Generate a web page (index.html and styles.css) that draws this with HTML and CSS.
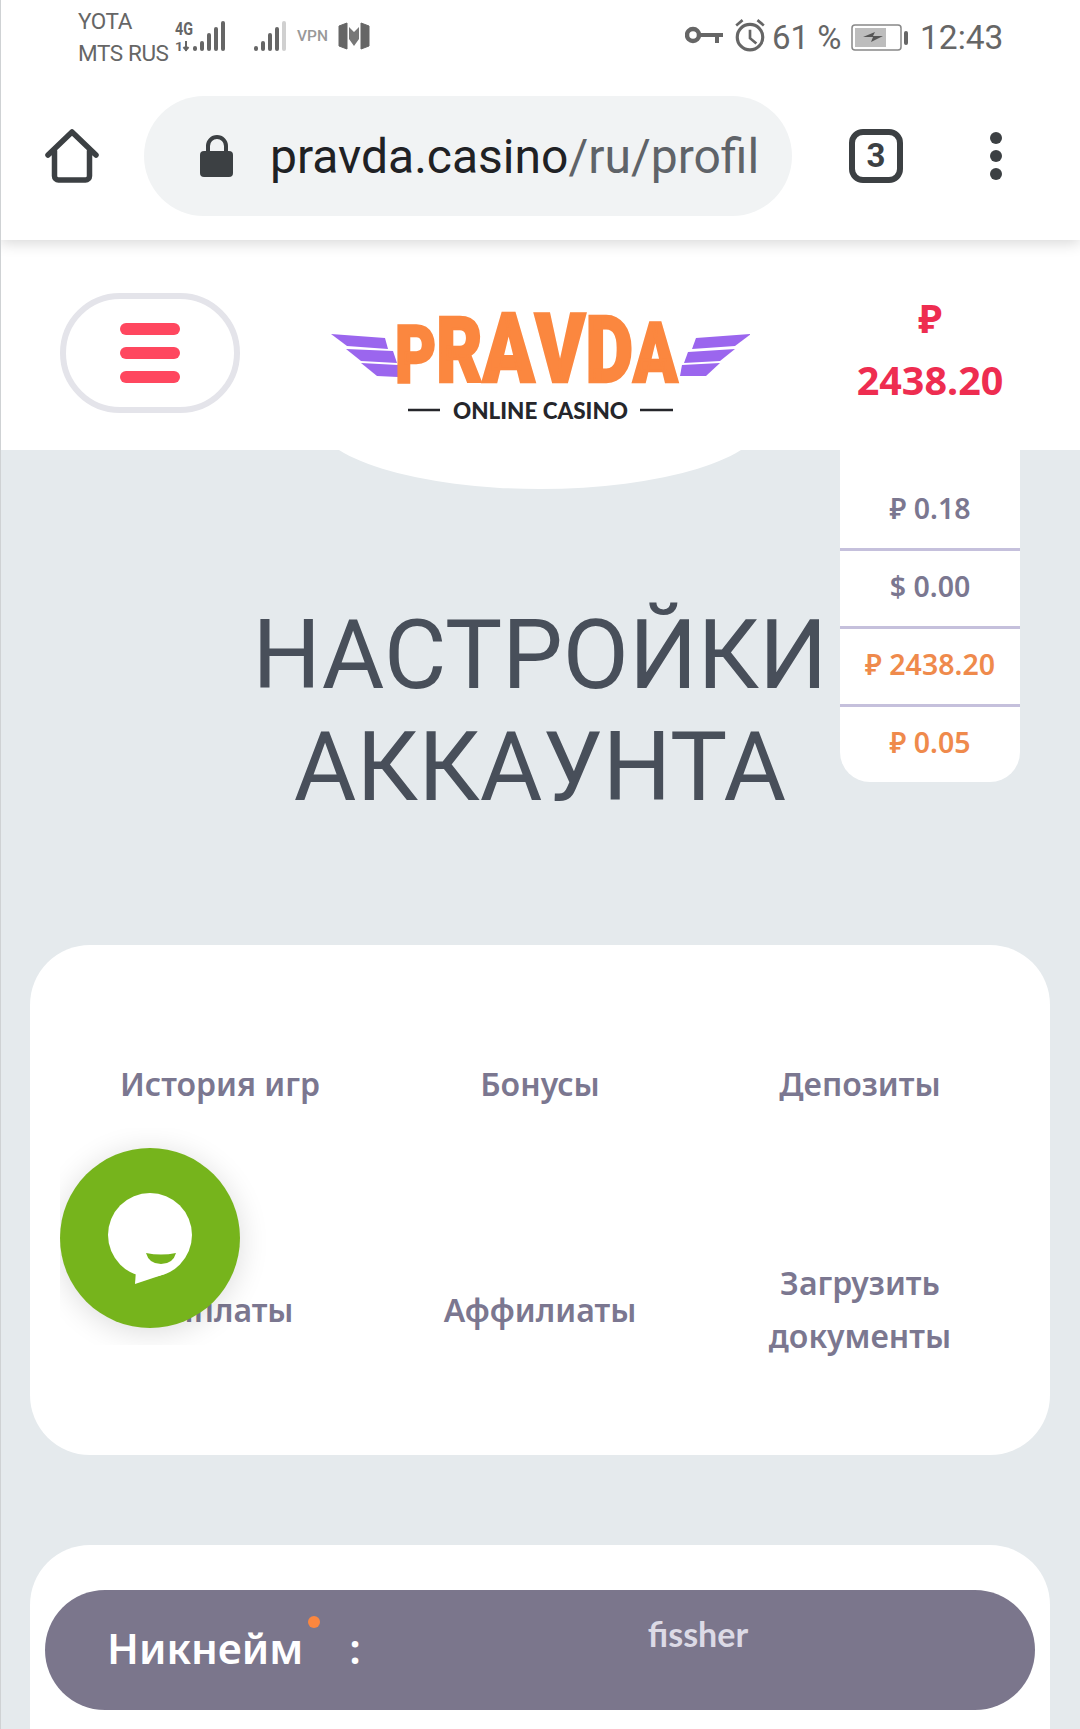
FILE: index.html
```html
<!DOCTYPE html>
<html lang="ru">
<head>
    <meta charset="UTF-8">
    <meta name="viewport" content="width=device-width, initial-scale=1.0">
    <title>Настройки аккаунта</title>
    <link rel="stylesheet" href="styles.css">
</head>
<body>
    <!-- status bar -->
    <div class="status">
        <div class="carriers">
            <div>YOTA</div>
            <div>MTS RUS</div>
        </div>
        <svg class="status-left" width="200" height="40" viewBox="170 15 200 40">
            <text x="175" y="35" class="net-label" textLength="18" lengthAdjust="spacingAndGlyphs">4G</text>
            <text x="175" y="51" class="net-label small" textLength="8" lengthAdjust="spacingAndGlyphs">1</text>
            <path d="M186 41v10M183.500 47l2.500 3 2.500-3" class="net-arrow"/>
            <g fill="#666">
                <rect x="193" y="46" width="4" height="5" rx="2"/>
                <rect x="200" y="41" width="4" height="10" rx="2"/>
                <rect x="207" y="33" width="4" height="18" rx="2"/>
                <rect x="214" y="27" width="4" height="24" rx="2"/>
                <rect x="221" y="21" width="4" height="30" rx="2"/>
                <rect x="254" y="46" width="4" height="5" rx="2"/>
                <rect x="261" y="41" width="4" height="10" rx="2"/>
                <rect x="268" y="33" width="4" height="18" rx="2"/>
                <rect x="275" y="27" width="4" height="24" rx="2"/>
            </g>
            <rect x="282" y="21" width="4" height="30" rx="2" fill="#d0d0d0"/>
            <text x="297" y="41" class="vpn">VPN</text>
            <path d="M339 26l8-3v26l-8-3zM369 26l-8-3v26l8-3z" fill="#666" stroke="#666" stroke-width="1" stroke-linejoin="round"/>
            <path d="M349 27l5 5 5-5v12l-5 7-5-7z" fill="#777"/>
        </svg>
        <div class="status-right">
            <svg width="40" height="22" viewBox="0 0 40 22">
                <circle cx="8" cy="9" r="6" fill="none" stroke="#666" stroke-width="4.500"/>
                <path d="M15 9h23M32 9v8" fill="none" stroke="#666" stroke-width="4"/>
            </svg>
            <svg class="alarm" width="34" height="34" viewBox="0 0 32 32">
                <circle cx="16" cy="18" r="12" fill="none" stroke="#666" stroke-width="3"/>
                <path d="M16 11v8l6 5M3 7l6-5M29 7l-6-5" fill="none" stroke="#666" stroke-width="2.500"/>
            </svg>
            <span class="pct">61 %</span>
            <svg class="battery" width="58" height="28" viewBox="0 0 58 28">
                <rect x="1" y="2" width="49" height="25" rx="3" fill="none" stroke="#888" stroke-width="1.500"/>
                <rect x="4" y="5" width="31" height="19" fill="#bdbdbd"/>
                <path d="M12 14l12-5-2 4h10l-12 6 2-5z" fill="#555"/>
                <rect x="53" y="8" width="4" height="14" rx="2" fill="#666"/>
            </svg>
            <span class="clock">12:43</span>
        </div>
    </div>

    <!-- browser toolbar -->
    <div class="toolbar">
        <svg class="home-icon" width="54" height="54" viewBox="0 0 54 54">
            <path d="M3 26L27 3l24 23M9.500 22v25a4 4 0 0 0 4 4h27a4 4 0 0 0 4-4V22" fill="none" stroke="#3c4043" stroke-width="5.500" stroke-linecap="round" stroke-linejoin="round"/>
        </svg>
        <div class="url-pill">
            <svg class="lock" width="34" height="42" viewBox="0 0 34 42">
                <path d="M8 18V11a9 9 0 0 1 18 0v7" fill="none" stroke="#3c4043" stroke-width="4"/>
                <rect x="0" y="16" width="33" height="26" rx="4" fill="#3c4043"/>
            </svg>
            <span class="url"><span class="url-host">pravda.casino</span>/ru/profil</span>
        </div>
        <div class="tab-count">3</div>
        <div class="dots"><i></i><i></i><i></i></div>
    </div>

    <!-- site header -->
    <header class="site-header">
        <button class="menu-btn"><i></i><i></i><i></i></button>
        <svg class="logo" width="420" height="140" viewBox="330 283 420 140">
            <g fill="#9b66ee">
                <polygon points="331,334 385,338 388,349 347,346"/>
                <polygon points="346,349 393,351 397,363 361,361"/>
                <polygon points="361,363 398,365 398,377 377,376"/>
                <polygon points="751,334 696,338 692,349 735,346"/>
                <polygon points="735,349 688,352 684,363 720,361"/>
                <polygon points="720,363 682,365 680,376 706,376"/>
            </g>
            <text class="logo-word" transform="translate(395 382) scale(.79 1)"><tspan font-size="80">P</tspan><tspan font-size="90">R</tspan><tspan font-size="97">A</tspan><tspan font-size="97">V</tspan><tspan font-size="93">D</tspan><tspan font-size="83">A</tspan></text>
            <path d="M408 410h32M640 410h33" stroke="#25262b" stroke-width="2.500"/>
            <text x="453" y="419" class="logo-sub" textLength="175" lengthAdjust="spacingAndGlyphs">ONLINE CASINO</text>
        </svg>
        <div class="balance">
            <div>₽</div>
            <div>2438.20</div>
        </div>
        <div class="logo-bump"></div>
        <ul class="wallets">
            <li>₽ 0.18</li>
            <li>$ 0.00</li>
            <li class="active">₽ 2438.20</li>
            <li class="active">₽ 0.05</li>
        </ul>
    </header>

    <main>
        <h1>НАСТРОЙКИ АККАУНТА</h1>

        <nav class="card tabs">
            <a>История игр</a>
            <a>Бонусы</a>
            <a>Депозиты</a>
            <a>Выплаты</a>
            <a>Аффилиаты</a>
            <a>Загрузить<br>документы</a>
        </nav>

        <section class="card profile">
            <div class="field">
                <span class="field-name">Никнейм<i class="req"></i></span>
                <span class="field-colon">:</span>
                <span class="field-value">fissher</span>
            </div>
        </section>
    </main>

    <!-- chat widget -->
    <div class="chat-wrap">
        <div class="chat-btn">
            <svg width="180" height="180" viewBox="0 0 180 180">
                <circle cx="90" cy="87" r="42" fill="#fff"/>
                <path d="M76 122l-1 14 30-10z" fill="#fff"/>
                <path d="M86 105q15 3 30 0q-3 11-15 11t-15-11z" fill="#76b41c"/>
            </svg>
        </div>
    </div>
</body>
</html>
```

FILE: styles.css
```css
html, body {
    margin: 0;
    height: 1729px;
    overflow: hidden;
}
body {
    position: relative;
    background-color: #e5eaed;
    font-family: "Noto Sans", Arial, sans-serif;
}
body::before {
    content: "";
    position: absolute;
    left: 0;
    top: 0;
    bottom: 0;
    width: 1px;
    background-color: #cfd2d4;
    z-index: 5;
}

/* status bar */
.status {
    display: flex;
    align-items: flex-start;
    position: relative;
    z-index: 3;
    height: 80px;
    padding-left: 78px;
    background-color: #fff;
    font-family: Roboto, Arial, sans-serif;
    color: #666;
}
.carriers {
    width: 92px;
    padding-top: 5px;
    font-size: 22.5px;
    line-height: 32px;
    letter-spacing: -0.4px;
    white-space: nowrap;
}
.status-left {
    margin-top: 15px;
}
.net-label {
    font-family: Roboto, Arial, sans-serif;
    font-size: 19px;
    font-weight: 700;
    fill: #666;
}
.net-label.small {
    font-size: 13px;
}
.net-arrow {
    fill: none;
    stroke: #666;
    stroke-width: 2;
}
.vpn {
    font-family: Roboto, Arial, sans-serif;
    font-size: 15.5px;
    font-weight: 500;
    fill: #999;
}
.status-right {
    display: flex;
    align-items: center;
    position: absolute;
    left: 685px;
    top: 19px;
    height: 36px;
}
.status-right svg {
    flex: none;
}
.alarm {
    margin-left: 8px;
    margin-top: -4px;
}
.pct {
    margin-left: 5px;
    font-size: 33px;
    font-weight: 400;
    width: 72px;
    white-space: nowrap;
}
.battery {
    margin-left: 7px;
}
.clock {
    margin-left: 11px;
    font-size: 33.5px;
    font-weight: 400;
}

/* browser toolbar */
.toolbar {
    display: flex;
    align-items: center;
    height: 152px;
    padding: 0 0 8px 45px;
    background-color: #fff;
    box-shadow: 0 3px 14px rgba(0, 0, 0, 0.16);
    position: relative;
    z-index: 2;
    font-family: Roboto, Arial, sans-serif;
}
.url-pill {
    display: flex;
    align-items: center;
    width: 648px;
    height: 120px;
    margin-left: 45px;
    padding-left: 56px;
    box-sizing: border-box;
    border-radius: 60px;
    background-color: #f1f3f4;
    overflow: hidden;
}
.url {
    margin-left: 36px;
    font-size: 48px;
    color: #5f6368;
    white-space: nowrap;
}
.url-host {
    color: #202124;
}
.tab-count {
    width: 54px;
    height: 54px;
    margin-left: 57px;
    box-sizing: border-box;
    border: 6px solid #3c4043;
    border-radius: 14px;
    text-align: center;
    font-size: 33px;
    font-weight: 700;
    line-height: 42px;
    color: #3c4043;
}
.dots {
    display: flex;
    flex-direction: column;
    gap: 6px;
    margin-left: 87px;
}
.dots i {
    display: block;
    width: 12px;
    height: 12px;
    border-radius: 50%;
    background-color: #3c4043;
}

/* site header */
.site-header {
    position: relative;
    z-index: 1;
    display: flex;
    justify-content: space-between;
    align-items: flex-start;
    height: 210px;
    padding: 53px 60px 0;
    box-sizing: border-box;
    background-color: #fff;
}
.menu-btn {
    display: flex;
    flex-direction: column;
    align-items: center;
    gap: 12px;
    width: 180px;
    height: 120px;
    padding: 24px 0 0;
    box-sizing: border-box;
    border: 6px solid #e4e4ea;
    border-radius: 60px;
    background-color: #fff;
}
.menu-btn i {
    display: block;
    flex: none;
    width: 60px;
    height: 12px;
    border-radius: 6px;
    background-color: #ff475f;
}
.logo {
    position: relative;
    z-index: 1;
    margin-top: -10px;
}
.logo-word {
    font-family: Roboto, Arial, sans-serif;
    font-weight: 900;
    fill: #fb873f;
    stroke: #fb873f;
    stroke-width: 2.5;
}
.logo-sub {
    font-family: Lato, "Open Sans", Arial, sans-serif;
    font-size: 22px;
    font-weight: 900;
    fill: #25262b;
}
.balance {
    width: 180px;
    margin-top: -6px;
    text-align: center;
    font-size: 39.5px;
    font-weight: 700;
    line-height: 62px;
    color: #ee2d50;
}
.logo-bump {
    position: absolute;
    left: 339px;
    top: 100%;
    width: 402px;
    height: 39px;
    background-color: #fff;
    clip-path: ellipse(223px 69px at 50% -30px);
}
.wallets {
    position: absolute;
    right: 60px;
    top: 100%;
    width: 180px;
    margin: 0;
    padding: 0;
    list-style: none;
    border-radius: 0 0 30px 30px;
    background-color: #fff;
    text-align: center;
    font-size: 28.5px;
    font-weight: 600;
    color: #7b7790;
    z-index: 3;
}
.wallets li {
    height: 75px;
    line-height: 70px;
    border-bottom: 3px solid #c5c0dc;
}
.wallets li:first-child {
    height: 98px;
    line-height: 116px;
}
.wallets li:last-child {
    border-bottom: none;
    line-height: 70px;
}
.wallets .active {
    color: #ef8a4c;
}

/* page content */
main {
    padding: 0 30px;
}
h1 {
    max-width: 600px;
    margin: 149px auto 122px;
    text-align: center;
    font-family: Roboto, Arial, sans-serif;
    font-size: 96px;
    font-weight: 400;
    line-height: 112px;
    color: #484f5a;
}
.card {
    background-color: #fff;
    border-radius: 60px;
}
.tabs {
    display: grid;
    grid-template-columns: repeat(3, 1fr);
    grid-template-rows: 226px 226px;
    align-items: center;
    height: 510px;
    padding: 25px 30px 33px;
    box-sizing: border-box;
    text-align: center;
    font-size: 32px;
    font-weight: 600;
    line-height: 53px;
    color: #7b7790;
}
.profile {
    height: 284px;
    margin-top: 90px;
    padding: 45px 15px 0;
    box-sizing: border-box;
}
.field {
    display: flex;
    align-items: center;
    height: 120px;
    padding-left: 62px;
    border-radius: 60px;
    background-color: #7b768c;
    color: #fff;
}
.field-name {
    position: relative;
    margin-top: -6px;
    font-size: 42px;
    font-weight: 600;
}
.req {
    position: absolute;
    right: -17px;
    top: -3px;
    width: 12px;
    height: 12px;
    border-radius: 50%;
    background-color: #fb873f;
}
.field-colon {
    margin-left: 46px;
    margin-top: -6px;
    font-size: 42px;
    font-weight: 600;
}
.field-value {
    flex: 1;
    margin-top: -34px;
    text-align: center;
    font-family: Lato, "Noto Sans", sans-serif;
    font-size: 34px;
    font-weight: 700;
    color: #dcdae6;
}

/* chat widget */
.chat-wrap {
    position: absolute;
    left: 60px;
    top: 1128px;
    width: 220px;
    height: 217px;
    overflow: hidden;
    z-index: 4;
}
.chat-btn {
    width: 180px;
    height: 180px;
    margin-top: 20px;
    border-radius: 50%;
    background-color: #76b41c;
    box-shadow: 0 4px 30px rgba(0, 0, 0, 0.14);
}
.chat-btn svg {
    display: block;
}
```
